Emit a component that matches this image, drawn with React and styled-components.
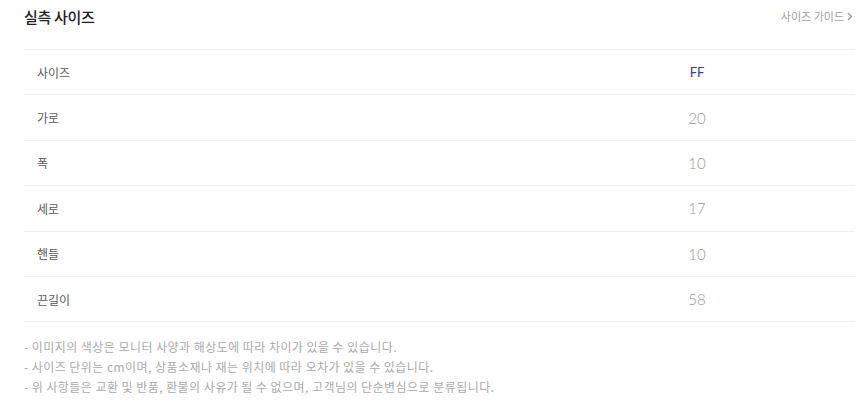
import React from 'react';
import { styled, createGlobalStyle } from 'styled-components';

const rows = [
  { label: '사이즈', value: 'FF', head: true },
  { label: '가로', value: '20' },
  { label: '폭', value: '10' },
  { label: '세로', value: '17' },
  { label: '핸들', value: '10' },
  { label: '끈길이', value: '58' },
];

const notes = [
  '- 이미지의 색상은 모니터 사양과 해상도에 따라 차이가 있을 수 있습니다.',
  '- 사이즈 단위는 cm이며, 상품소재나 재는 위치에 따라 오차가 있을 수 있습니다.',
  '- 위 사항들은 교환 및 반품, 환불의 사유가 될 수 없으며, 고객님의 단순변심으로 분류됩니다.',
];

const App = () => {
  return (
    <>
      <GlobalStyle />
      <Wrap>
        <Header>
          <Title>실측 사이즈</Title>
          <GuideLink>
            사이즈 가이드
            <svg width="6" height="9" viewBox="0 0 6 9">
              <path d="M1 1l3.5 3.5L1 8" fill="none" stroke="#999" strokeWidth="1.2" />
            </svg>
          </GuideLink>
        </Header>
        <Table>
          {rows.map((r) => (
            <Row key={r.label}>
              <Label>{r.label}</Label>
              <Value $head={r.head}>{r.value}</Value>
            </Row>
          ))}
        </Table>
        <Notes>
          {notes.map((n) => (
            <p key={n}>{n}</p>
          ))}
        </Notes>
      </Wrap>
    </>
  );
};

const GlobalStyle = createGlobalStyle`
  body {
    margin: 0;
    background: #fff;
    font-family: "Noto Sans CJK KR", "Noto Sans", sans-serif;
  }
`;

const Wrap = styled.div`
  padding: 0 5px 0 24px;
`;

const Header = styled.div`
  display: flex;
  justify-content: space-between;
  align-items: center;
  height: 32px;
  padding-bottom: 17px;
`;

const Title = styled.h2`
  margin: 0;
  font-size: 15px;
  font-weight: 500;
  color: #222;
  letter-spacing: -0.3px;
`;

const GuideLink = styled.span`
  display: flex;
  align-items: center;
  gap: 3px;
  font-size: 11px;
  color: #a0a0a0;
  margin-right: 2px;
  cursor: pointer;
`;

const Table = styled.div`
  border-top: 1px solid #eeeeee;
`;

const Row = styled.div`
  display: grid;
  grid-template-columns: 1fr 316px;
  align-items: center;
  height: 44.4px;
  border-bottom: 1px solid #eeeeee;
`;

const Label = styled.div`
  padding-left: 13px;
  font-size: 12px;
  color: #5a5a5a;
`;

const Value = styled.div`
  text-align: center;
  font-family: Lato, "Noto Sans", sans-serif;
  font-size: ${(p) => (p.$head ? '13px' : '15px')};
  color: ${(p) => (p.$head ? '#3d3d99' : '#999')};
  font-weight: ${(p) => (p.$head ? 400 : 300)};
`;

const Notes = styled.div`
  padding-top: 15px;
  p {
    margin: 0;
    font-size: 12px;
    letter-spacing: 0.45px;
    line-height: 20px;
    color: #aaa;
  }
`;

export default App;
